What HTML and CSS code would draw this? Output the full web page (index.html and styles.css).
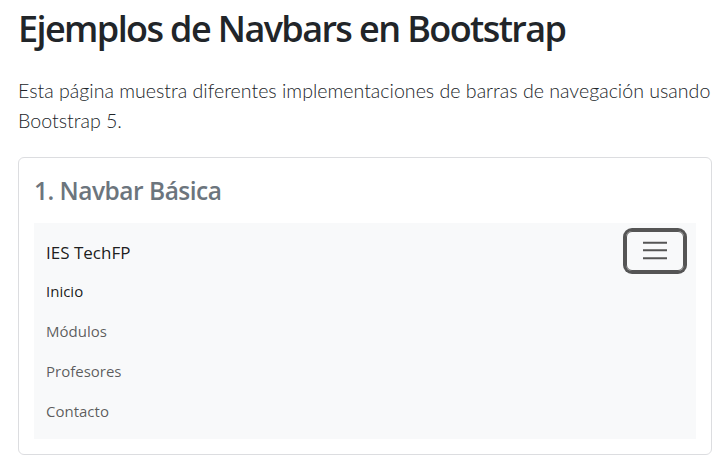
FILE: index.html
```html
<!DOCTYPE html>
<html lang="es">
<head>
<meta charset="utf-8">
<title>Ejemplos de Navbars en Bootstrap</title>
<link rel="stylesheet" href="styles.css">
</head>
<body>
<main class="page">
  <h1 class="title">Ejemplos de Navbars en Bootstrap</h1>
  <p class="lead">Esta página muestra diferentes implementaciones de barras de navegación usando Bootstrap 5.</p>

  <section class="card">
    <h3 class="card-title">1. Navbar Básica</h3>
    <nav class="navbar">
      <div class="navbar-top">
        <a class="brand" href="#">IES TechFP</a>
        <button class="toggler" type="button" aria-label="Menú">
          <svg class="toggler-icon" width="26" height="19" viewBox="0 0 26 19" aria-hidden="true">
            <path d="M1 1.7h24M1 9.3h24M1 17.3h24" stroke="#555" stroke-width="2" fill="none"/>
          </svg>
        </button>
      </div>
      <ul class="nav">
        <li><a class="nav-link active" href="#">Inicio</a></li>
        <li><a class="nav-link" href="#">Módulos</a></li>
        <li><a class="nav-link" href="#">Profesores</a></li>
        <li><a class="nav-link" href="#">Contacto</a></li>
      </ul>
    </nav>
  </section>
</main>
</body>
</html>
```
FILE: styles.css
```css
* { box-sizing: border-box; }

html, body {
  margin: 0;
  background: #fff;
}

body {
  font-family: "Open Sans", "Noto Sans", sans-serif;
  color: #212529;
}

.page {
  padding: 7px 16px 0 18px;
}

.title {
  margin: 0 0 26px;
  font-size: 36px;
  font-weight: 600;
  line-height: 43.2px;
  letter-spacing: -1.6px;
  color: #212529;
}

.lead {
  margin: 0 0 21px;
  font-family: "Lato", "Open Sans", sans-serif;
  font-size: 19.6px;
  font-weight: 300;
  line-height: 30px;
  color: #212529;
}

.card {
  border: 1px solid #dcdde0;
  border-radius: 6px;
  padding: 18px 15px 15px;
}

.card-title {
  margin: 0 0 17px;
  font-size: 24.5px;
  font-weight: 600;
  line-height: 29.4px;
  letter-spacing: -0.5px;
  color: #6c757d;
}

.navbar {
  background: #f8f9fa;
  padding: 8px 12px;
}

.navbar-top {
  display: flex;
  align-items: center;
  justify-content: space-between;
  height: 40px;
}

.brand {
  display: block;
  padding: 7px 0 3px;
  font-size: 17px;
  line-height: 30px;
  color: rgba(0, 0, 0, 0.9);
  text-decoration: none;
}

.toggler {
  display: flex;
  align-items: center;
  justify-content: center;
  width: 58px;
  height: 40px;
  padding: 0;
  background: transparent;
  border: 1px solid #555;
  border-radius: 6px;
  box-shadow: 0 0 0 3px #555;
  cursor: pointer;
}

.toggler-icon {
  display: block;
}

.nav {
  list-style: none;
  margin: 0;
  padding: 0;
}

.nav-link {
  display: block;
  padding: 8px 0;
  font-size: 15px;
  line-height: 24px;
  color: rgba(0, 0, 0, 0.65);
  text-decoration: none;
}

.nav-link.active {
  color: rgba(0, 0, 0, 0.9);
}
```
